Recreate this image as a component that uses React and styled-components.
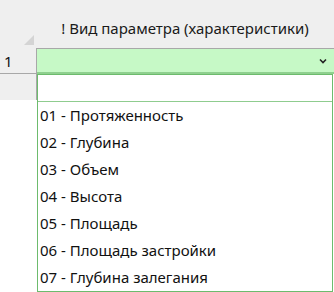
import React from "react";
import styled, { createGlobalStyle } from "styled-components";

const GlobalStyle = createGlobalStyle`
    body {
        margin: 0;
        background: #ffffff;
        font-family: "Noto Sans", "Open Sans", sans-serif;
        color: #111;
    }
`;

const options = [
    "01 - Протяженность",
    "02 - Глубина",
    "03 - Объем",
    "04 - Высота",
    "05 - Площадь",
    "06 - Площадь застройки",
    "07 - Глубина залегания",
];

const App = () => {
    return (
        <>
            <GlobalStyle />
            <Sheet>
                <HeaderRow>
                    <Corner>
                        <Triangle />
                    </Corner>
                    <ColumnTitle>! Вид параметра (характеристики)</ColumnTitle>
                </HeaderRow>
                <Row>
                    <RowNumber>1</RowNumber>
                    <SelectCell>
                        <svg width="8" height="6" viewBox="0 0 8 6">
                            <polyline points="1,1.5 4,4.5 7,1.5" fill="none" stroke="#222" strokeWidth="1.6" />
                        </svg>
                    </SelectCell>
                </Row>
                <Row>
                    <RowNumber $empty />
                </Row>
                <Dropdown>
                    <SearchBox />
                    {options.map((o) => (
                        <Option key={o}>{o}</Option>
                    ))}
                </Dropdown>
            </Sheet>
        </>
    );
};

const Sheet = styled.div`
    position: relative;
    width: 334px;
    height: 292px;
    overflow: hidden;
`;

const HeaderRow = styled.div`
    display: flex;
    height: 48px;
    background: #efefef;
`;

const Corner = styled.div`
    width: 36px;
    display: flex;
    align-items: flex-end;
    justify-content: flex-end;
    padding: 0 2px 3px 0;
    box-sizing: border-box;
`;

const Triangle = styled.div`
    width: 0;
    height: 0;
    border-left: 10px solid transparent;
    border-bottom: 10px solid #d4d4d4;
`;

const ColumnTitle = styled.div`
    flex: 1;
    display: flex;
    align-items: center;
    justify-content: center;
    padding-top: 8px;
    font-size: 15px;
    color: #1a1a1a;
`;

const Row = styled.div`
    display: flex;
    height: 26px;
`;

const RowNumber = styled.div`
    width: 37px;
    box-sizing: border-box;
    background: #efefef;
    border-right: 1px solid #a8a8a8;
    border-bottom: ${(p) => (p.$empty ? "none" : "1px solid #a8a8a8")};
    padding-left: 4px;
    font-size: 15px;
    line-height: 26px;
`;

const SelectCell = styled.div`
    flex: 1;
    box-sizing: border-box;
    background: #c6f9c6;
    border-top: 1px solid #a8a8a8;
    border-bottom: 2px solid #8fd08f;
    display: flex;
    align-items: center;
    justify-content: flex-end;
    padding-right: 7px;
`;

const Dropdown = styled.div`
    position: absolute;
    left: 37px;
    top: 74px;
    width: 296px;
    height: 218px;
    box-sizing: border-box;
    background: #fff;
    border: 1px solid #6dbb6d;
`;

const SearchBox = styled.div`
    height: 26px;
    border-bottom: 1px solid #8fcc8f;
`;

const Option = styled.div`
    height: 27px;
    line-height: 27px;
    padding-left: 2px;
    font-size: 15px;
    color: #111;
    white-space: nowrap;
`;

export default App;
